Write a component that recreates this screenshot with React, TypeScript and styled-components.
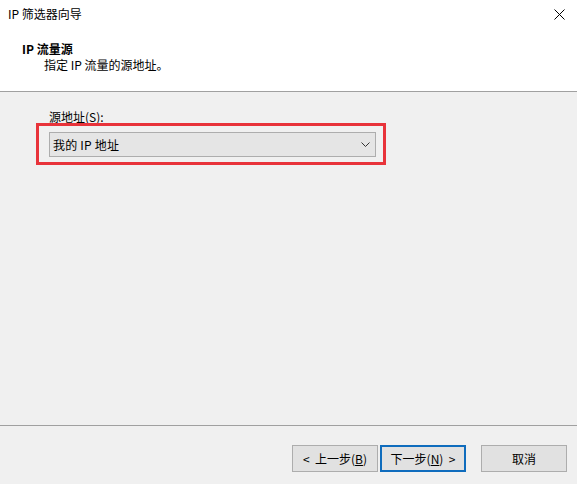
import React from "react";
import styled, { createGlobalStyle } from "styled-components";

const Global = createGlobalStyle`
  html, body { margin: 0; padding: 0; background: #ffffff; }
  * { box-sizing: border-box; }
  body {
    font-family: "Noto Sans CJK SC", "Noto Sans", sans-serif;
    font-size: 12px;
    color: #000;
  }
`;

const Window = styled.div`
  width: 577px;
  height: 484px;
  display: flex;
  flex-direction: column;
  background: #ffffff;
  overflow: hidden;
`;

const TitleBar = styled.div`
  height: 28px;
  display: flex;
  align-items: center;
  justify-content: space-between;
  padding: 0 6px 0 8px;
  font-size: 12px;
  line-height: 16px;
`;

const CloseButton = styled.div`
  width: 24px;
  height: 24px;
  display: flex;
  align-items: center;
  justify-content: center;
`;

const Header = styled.div`
  height: 64px;
  padding: 13px 0 0 22px;
  display: flex;
  flex-direction: column;
  border-bottom: 1px solid #a0a0a0;
  background: #ffffff;
`;

const HeaderTitle = styled.div`
  font-weight: 700;
  line-height: 16px;
`;

const HeaderSub = styled.div`
  line-height: 16px;
  padding-left: 22px;
`;

const Body = styled.div`
  flex: 1;
  background: #f0f0f0;
  padding: 17px 0 0 49px;
  display: flex;
  flex-direction: column;
`;

const Label = styled.div`
  line-height: 16px;
  margin-bottom: 7px;
  u { text-decoration: underline; }
`;

const ComboWrap = styled.div`
  position: relative;
  width: 327px;
  height: 25px;
`;

const Combo = styled.div`
  width: 100%;
  height: 100%;
  background: #e5e5e5;
  border: 1px solid #adadad;
  display: flex;
  align-items: center;
  justify-content: space-between;
  padding: 0 5px 0 3px;
  line-height: 16px;
  letter-spacing: 0.2px;
`;

const Highlight = styled.div`
  position: absolute;
  top: -9px;
  left: -13px;
  right: -10px;
  bottom: -8px;
  border: 3px solid #e8333a;
  pointer-events: none;
`;

const Footer = styled.div`
  height: 59px;
  border-top: 1px solid #a0a0a0;
  background: #f0f0f0;
  display: flex;
  justify-content: flex-end;
  align-items: flex-start;
  padding: 19px 10px 0 0;
  gap: 2px;
`;

const Button = styled.div<{ $primary?: boolean; $gapLeft?: number }>`
  width: 86px;
  height: 27px;
  margin-left: ${(p) => p.$gapLeft ?? 0}px;
  background: #e1e1e1;
  border: ${(p) => (p.$primary ? "2px solid #0f6cbd" : "1px solid #adadad")};
  display: flex;
  align-items: center;
  justify-content: center;
  line-height: 16px;
  white-space: pre;
  u { text-decoration: underline; }
`;

export default function App() {
  return (
    <>
      <Global />
      <Window>
        <TitleBar>
          <span>IP 筛选器向导</span>
          <CloseButton>
            <svg width="11" height="11" viewBox="0 0 11 11">
              <path d="M0.5 0.5 L10.5 10.5 M10.5 0.5 L0.5 10.5" stroke="#000" strokeWidth="1" fill="none" />
            </svg>
          </CloseButton>
        </TitleBar>
        <Header>
          <HeaderTitle>IP 流量源</HeaderTitle>
          <HeaderSub>指定 IP 流量的源地址。</HeaderSub>
        </Header>
        <Body>
          <Label>
            源地址(<u>S</u>):
          </Label>
          <ComboWrap>
            <Combo>
              <span>我的 IP 地址</span>
              <svg width="9" height="5" viewBox="0 0 9 5">
                <path d="M0.5 0.5 L4.5 4.5 L8.5 0.5" stroke="#333" strokeWidth="1" fill="none" />
              </svg>
            </Combo>
            <Highlight />
          </ComboWrap>
        </Body>
        <Footer>
          <Button>
            {"<  上一步("}<u>B</u>)
          </Button>
          <Button $primary>
            下一步(<u>N</u>){"  >"}
          </Button>
          <Button $gapLeft={13}>取消</Button>
        </Footer>
      </Window>
    </>
  );
}
